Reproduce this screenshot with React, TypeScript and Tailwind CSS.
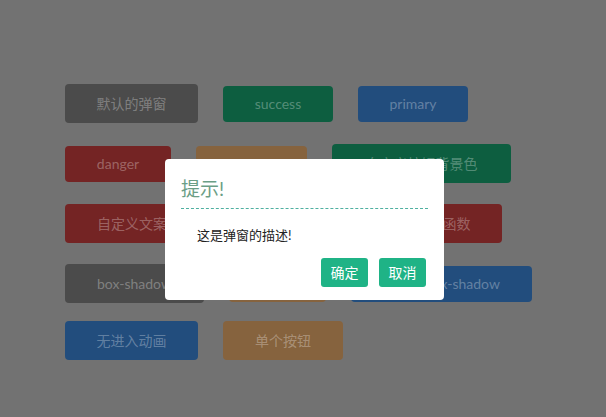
const font = { fontFamily: '"Lato", "Noto Sans CJK SC", sans-serif' };

type Btn = { label: string; w: string; h: string; bg: string };

const rows: { mt: string; items: Btn[] }[] = [
  {
    mt: "mt-[83px]",
    items: [
      { label: "默认的弹窗", w: "w-[133px]", h: "h-[39px]", bg: "bg-[#4b4b4b]" },
      { label: "success", w: "w-[110px]", h: "h-[36px]", bg: "bg-[#0d5e40]" },
      { label: "primary", w: "w-[110px]", h: "h-[36px]", bg: "bg-[#224d7d]" },
    ],
  },
  {
    mt: "mt-[21px]",
    items: [
      { label: "danger", w: "w-[106px]", h: "h-[36px]", bg: "bg-[#742424]" },
      { label: "warning", w: "w-[111px]", h: "h-[36px]", bg: "bg-[#86633e]" },
      { label: "自定义按钮背景色", w: "w-[179px]", h: "h-[39px]", bg: "bg-[#0d5e40]" },
    ],
  },
  {
    mt: "mt-[21px]",
    items: [
      { label: "自定义文案", w: "w-[134px]", h: "h-[39px]", bg: "bg-[#742424]" },
      { label: "自定义按钮", w: "w-[134px]", h: "h-[39px]", bg: "bg-[#0d5e40]" },
      { label: "回调函数", w: "w-[119px]", h: "h-[39px]", bg: "bg-[#742424]" },
    ],
  },
  {
    mt: "mt-[21px]",
    items: [
      { label: "box-shadow", w: "w-[139px]", h: "h-[39px]", bg: "bg-[#4b4b4b]" },
      { label: "阴影", w: "w-[97px]", h: "h-[36px]", bg: "bg-[#86633e]" },
      { label: "自定义box-shadow", w: "w-[181px]", h: "h-[36px]", bg: "bg-[#224d7d]" },
    ],
  },
  {
    mt: "mt-[18px]",
    items: [
      { label: "无进入动画", w: "w-[133px]", h: "h-[39px]", bg: "bg-[#224d7d]" },
      { label: "单个按钮", w: "w-[120px]", h: "h-[39px]", bg: "bg-[#86633e]" },
    ],
  },
];

export default function App() {
  return (
    <div className="relative w-[606px] h-[417px] overflow-hidden bg-[#727272]" style={font}>
      <div className="pl-[65px] pt-px">
        {rows.map((row, i) => (
          <div key={i} className={`${row.mt} flex items-center gap-[25px] h-[39px]`}>
            {row.items.map((b) => (
              <button
                key={b.label}
                className={`${b.w} ${b.h} ${b.bg} rounded text-sm text-white/30 flex items-center justify-center`}
              >
                {b.label}
              </button>
            ))}
          </div>
        ))}
      </div>

      {/* modal over the dimmed page */}
      <div className="absolute left-[165px] top-[159px] w-[279px] h-[141px] bg-white rounded px-4 pt-[18px]">
        <h3 className="text-[19px] leading-[24px] text-[#6b9e86] pb-[7px] border-b border-dashed border-[#4fb0a0]">
          提示!
        </h3>
        <p className="pl-4 pt-[18px] text-[13px] leading-[16px] text-[#222]">这是弹窗的描述!</p>
        <div className="flex justify-end gap-[11px] mt-[15px] pr-[2px]">
          <button className="w-[47px] h-[29px] rounded-[3px] bg-[#1fb386] text-white text-sm">确定</button>
          <button className="w-[47px] h-[29px] rounded-[3px] bg-[#1fb386] text-white text-sm">取消</button>
        </div>
      </div>
    </div>
  );
}
